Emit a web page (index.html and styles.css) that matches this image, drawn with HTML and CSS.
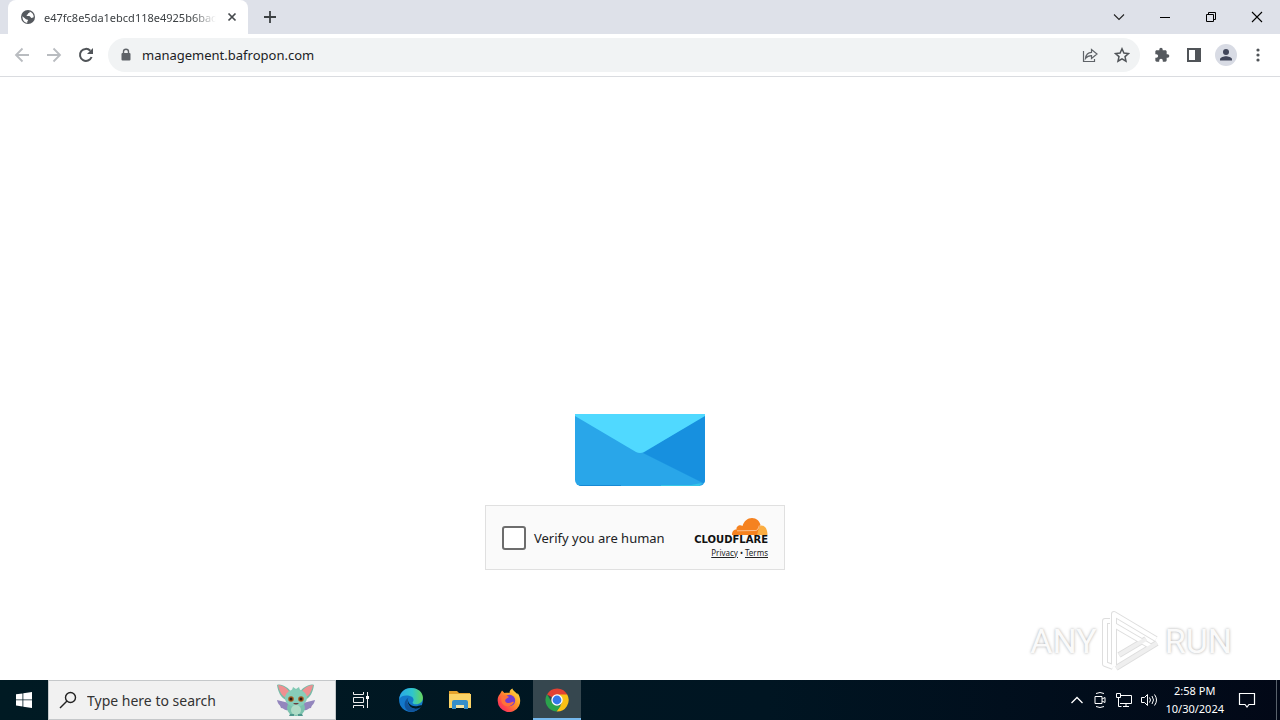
FILE: index.html
```html
<!DOCTYPE html>
<html lang="en">
<head>
<meta charset="utf-8">
<title>management.bafropon.com</title>
<link rel="stylesheet" href="styles.css">
</head>
<body>
<header class="browser">
  <div class="tabstrip">
    <div class="tab">
      <svg class="favicon" viewBox="0 0 16 16" width="16" height="16"><circle cx="8" cy="8" r="7" fill="#55595e"/><path d="M2.4 7.2 6 10.3c.8.4 1.6.1 2 .7.3.6-.8 1-.7 1.7v1.1C4.500 13.600 2.300 11 2.400 7.200zM9.700 2.400c.4 1-.5 1.300-1.200 1.700-.5.400-.2 1.100-.9 1.300-.9.200-1.300.7-.8 1.300.6.700 2 .1 2.900.5 1 .4.9 1.600 2 1.700.8.100 1.300-.5 2-.6C13.900 5.600 12.300 3.200 9.700 2.400z" fill="#fff"/></svg>
      <span class="tab-title">e47fc8e5da1ebcd118e4925b6bad</span>
      <button class="icon-btn tab-close" aria-label="Close tab"><svg viewBox="0 0 16 16" width="16" height="16"><path d="m4.500 4.500 7 7m0-7-7 7" stroke="#45494d" stroke-width="1.700"/></svg></button>
    </div>
    <button class="icon-btn new-tab" aria-label="New tab"><svg viewBox="0 0 16 16" width="16" height="16"><path d="M8 2v12M2 8h12" stroke="#3c4043" stroke-width="1.800"/></svg></button>
    <div class="window-controls">
      <button class="icon-btn" aria-label="Search tabs"><svg viewBox="0 0 16 16" width="16" height="16"><path d="m3 5.500 5 5 5-5" fill="none" stroke="#222" stroke-width="1.100"/></svg></button>
      <button class="icon-btn" aria-label="Minimize"><svg viewBox="0 0 16 16" width="16" height="16"><path d="M3 8.500h10" stroke="#000"/></svg></button>
      <button class="icon-btn" aria-label="Restore"><svg viewBox="0 0 16 16" width="16" height="16"><path d="M3.500 5.500h7v7h-7zM5.500 5.500v-2h7v7h-2" fill="none" stroke="#000"/></svg></button>
      <button class="icon-btn" aria-label="Close"><svg viewBox="0 0 16 16" width="16" height="16"><path d="m3 3 10 10m0-10L3 13" stroke="#000" stroke-width="1.100"/></svg></button>
    </div>
  </div>
  <div class="toolbar">
    <nav class="nav">
      <button class="icon-btn" aria-label="Back"><svg viewBox="0 0 16 16" width="16" height="16"><path d="M15 8H2m6.500-6.500L2 8l6.500 6.500" fill="none" stroke="#b9bcc0" stroke-width="1.800"/></svg></button>
      <button class="icon-btn" aria-label="Forward"><svg viewBox="0 0 16 16" width="16" height="16"><path d="M1 8h13M7.500 1.500 14 8l-6.500 6.500" fill="none" stroke="#b9bcc0" stroke-width="1.800"/></svg></button>
      <button class="icon-btn" aria-label="Reload"><svg viewBox="0 0 16 16" width="16" height="16"><path d="M13.600 10A6 6 0 1 1 12.300 3.700" fill="none" stroke="#505458" stroke-width="2"/><path d="M15 1v6H9z" fill="#505458"/></svg></button>
    </nav>
    <div class="omnibox">
      <svg viewBox="0 0 12 14" width="12" height="14"><path d="M3.500 6V3.700a2.500 2.500 0 0 1 5 0V6" fill="none" stroke="#5f6368" stroke-width="1.400"/><rect x="1.500" y="5" width="9" height="7.500" rx="1" fill="#5f6368"/></svg>
      <input class="url" type="text" value="management.bafropon.com" aria-label="Address">
      <button class="icon-btn" aria-label="Share"><svg viewBox="0 0 16 16" width="16" height="16"><path d="M1.500 4v10.500h11V12M3.500 11.500C4 7.500 6 5.500 9.500 5.400V2.500L15 7l-5.500 4.500V8.700c-3 0-4.500.8-6 2.800z" fill="none" stroke="#5f6368" stroke-width="1.200"/></svg></button>
      <button class="icon-btn" aria-label="Bookmark"><svg viewBox="0 0 16 16" width="16" height="16"><path d="m8 1.800 1.900 4.300 4.600.4-3.500 3.100 1 4.600-4-2.400-4 2.400 1-4.600-3.500-3.100 4.600-.4z" fill="none" stroke="#505458" stroke-width="1.500"/></svg></button>
    </div>
    <div class="actions">
      <button class="icon-btn" aria-label="Extensions"><svg viewBox="0 0 24 24" width="16" height="16"><path fill="#55595e" d="M20.500 11H19V7c0-1.100-.9-2-2-2h-4V3.500a2.500 2.500 0 0 0-5 0V5H4c-1.100 0-2 .9-2 2v3.800h1.500a2.700 2.700 0 0 1 0 5.400H2V20c0 1.100.9 2 2 2h3.800v-1.500a2.700 2.700 0 0 1 5.400 0V22H17c1.100 0 2-.9 2-2v-4h1.500a2.500 2.500 0 0 0 0-5z"/></svg></button>
      <button class="icon-btn" aria-label="Side panel"><svg viewBox="0 0 16 16" width="16" height="16"><path fill="#505458" fill-rule="evenodd" d="M1 1h14v14H1zm2 2v10h6V3z"/></svg></button>
      <button class="icon-btn" aria-label="Profile"><svg viewBox="0 0 22 22" width="22" height="22"><circle cx="11" cy="11" r="11" fill="#d8dbe4"/><circle cx="11" cy="8" r="3" fill="#41465a"/><path d="M5 16.500v-1.300c0-2 4-3 6-3s6 1 6 3v1.300z" fill="#41465a"/></svg></button>
      <button class="icon-btn" aria-label="Menu"><svg viewBox="0 0 16 16" width="16" height="16" fill="#505458"><circle cx="8" cy="3" r="1.600"/><circle cx="8" cy="8" r="1.600"/><circle cx="8" cy="13" r="1.600"/></svg></button>
    </div>
  </div>
</header>

<main class="page">
  <div class="challenge">
    <svg class="envelope" viewBox="0 0 130 72" width="130" height="72">
      <defs><clipPath id="env"><path d="M0 0h130v66a6 6 0 0 1-6 6H6a6 6 0 0 1-6-6z"/></clipPath></defs>
      <g clip-path="url(#env)"><path d="M0 0h130v72H0z" fill="#29a6e9"/><path d="M130 1v69L68 39z" fill="#1790df"/><path d="M0 0h130v2L69 38q-4 2-8 0L0 2z" fill="#50d9ff"/><path d="M4 71h42v1H4z" fill="#1689d4"/><path d="M86 71h30l11-2-3 3H86z" fill="#35c5e8"/></g>
    </svg>
    <div class="widget">
      <label class="verify"><input type="checkbox" class="box"><span>Verify you are human</span></label>
      <div class="brand">
        <svg viewBox="0 0 36 17" width="36" height="17"><path d="M0 17c0-4 2-5.500 4.500-5.500C4 8 8 6 10.500 8 12 3 15.500 0 20 0c4.500 0 7.500 3 8.500 7L26 17z" fill="#f58220"/><path d="M25 17c1-3 1.500-8 4-9.500 4-.2 6.500 3.500 6.500 9.500z" fill="#fbad41"/><path d="m5 12.800 18.500-.3c2 0 3-2 3.800-5" fill="none" stroke="#fff" stroke-width=".5"/></svg>
        <strong class="brand-name">CLOUDFLARE</strong>
        <div class="legal"><a href="#">Privacy</a><span>•</span><a href="#">Terms</a></div>
      </div>
    </div>
  </div>
  <div class="watermark">
    <span>ANY</span>
    <svg viewBox="0 0 60 64" width="60" height="64" fill="none" stroke-linejoin="round"><g stroke="#dedede" stroke-width="6"><path d="M13 57V5l42 25"/><path d="M9 12H4v43l8 3"/><path d="M13 16l36 21M15 59l41-25M18 46l27-16"/></g><g stroke="#fff" stroke-width="4"><path d="M13 57V5l42 25"/><path d="M9 12H4v43l8 3"/><path d="M13 16l36 21"/></g><path d="M15 59l41-25M18 46l27-16" stroke="#efefef" stroke-width="4"/></svg>
    <span>RUN</span>
  </div>
</main>

<footer class="taskbar">
  <button class="icon-btn start" aria-label="Start"><svg viewBox="0 0 16 16" width="16" height="16" fill="#fff"><path d="M0 2.300 6.500 1.400v6.100H0zM7.300 1.300 16 0v7.500H7.300zM0 8.300h6.500v6.200L0 13.600zM7.300 8.300H16V16l-8.700-1.300z"/></svg></button>
  <div class="search">
    <svg viewBox="0 0 18 18" width="18" height="18" fill="none" stroke="#222" stroke-width="1.400"><circle cx="11.500" cy="6.500" r="5"/><path d="m8 10-7 7"/></svg>
    <input class="search-input" type="text" placeholder="Type here to search" aria-label="Type here to search">
    <svg class="creature" viewBox="0 0 40 34" width="40" height="34"><path d="M13 20 1 17c1 5 3 4 4 8 3 0 3 3 7 2zM27 20l12-3c-1 5-3 4-4 8-3 0-3 3-7 2z" fill="#9386bd"/><path d="M1 2c4-2 12 3 14 7l-5 8C5 15 2 9 1 2zM38 2c-4-2-12 3-14 7l5 8c5-2 8-8 9-15z" fill="#76bba8"/><path d="M2 2c5 0 10 4 12 8l-4 5C5 12 3 7 2 2zM37 2c-5 0-10 4-12 8l4 5c5-3 7-8 8-13z" fill="#ef8f91"/><ellipse cx="20" cy="25" rx="9" ry="8" fill="#7bc2ad"/><ellipse cx="20" cy="15" rx="11" ry="9" fill="#87cdb9"/><path d="m16 7 1-3 3 2 3-2 1 3z" fill="#82c9b4"/><ellipse cx="20" cy="27" rx="5" ry="5" fill="#afdbc6"/><circle cx="15" cy="16" r="2.800" fill="#a85b20"/><circle cx="25" cy="16" r="2.800" fill="#a85b20"/><circle cx="15" cy="16" r="1.500" fill="#291b14"/><circle cx="25" cy="16" r="1.500" fill="#291b14"/><path d="M17 20q3 3 6 0" fill="#6b3d3e"/><path d="M14 31h4v2h-5zM22 31h4l1 2h-5z" fill="#4f978c"/></svg>
  </div>
  <nav class="apps">
    <button class="app task-view" aria-label="Task view"><svg viewBox="0 0 18 18" width="18" height="18" fill="none" stroke="#eee"><path d="M1.500 1v2.500h10V1M1.500 17v-2.500h10V17M1.500 6.500h10v5h-10zM15.500 1v16"/><path d="M14 5h3v3h-3z" fill="#fff" stroke="none"/></svg></button>
    <button class="app" aria-label="Edge"><svg viewBox="0 0 24 24" width="26" height="26"><defs><linearGradient id="edge"><stop stop-color="#2aa8e8"/><stop offset=".55" stop-color="#2fc5cd"/><stop offset="1" stop-color="#66d65b"/></linearGradient></defs><circle cx="12" cy="12" r="11" fill="#1378ca"/><path d="M1.200 11C2 4.500 6.500 1 12.300 1 18.500 1 23 5 23 10c0 4-3 6-6.200 6-2.300 0-3.800-.9-3.300-2 1.800-2 .8-5-2.500-5.800C7 7.200 2.500 8 1.200 11z" fill="url(#edge)"/><path d="M9.500 10C7 14 10 20 16 20c2 0 4-1 5-1.800C17 24 10 24 7.500 20.500 5 17 6 12 9.500 10z" fill="#11549b"/><path d="M9.500 10c-1.500 4 2 8.500 8 7.700 2.500-.3 3.800-1.200 4.500-1 0 1-1 2-1 2-7 4-14-2-11.500-8.700z" fill="#001923"/></svg></button>
    <button class="app" aria-label="File Explorer"><svg viewBox="0 0 22 20" width="22" height="20"><path d="M0 1h8l2 2h11v15H0z" fill="#e5a32d"/><path d="M0 4h22v14H0z" fill="#fbd366"/><path d="M3 19v-7q0-2 2-2h12q2 0 2 2v7h-4v-4H7v4z" fill="#378fc9"/><path d="M7 15h8v3H7z" fill="#f5e3a2"/></svg></button>
    <button class="app" aria-label="Firefox"><svg viewBox="0 0 24 24" width="24" height="24"><defs><linearGradient id="fox" x1="1" y1="0" x2="0" y2="1"><stop stop-color="#fff150"/><stop offset=".4" stop-color="#ff9a26"/><stop offset=".75" stop-color="#ff434c"/><stop offset="1" stop-color="#e6247d"/></linearGradient></defs><path d="M3 6 5 2.500 7.500 5c2-.4 4-.2 5 0 0-2 1-4 3-4.500 0 2 4 4 5 6V5c3 4 3.500 9 1.500 13A11.300 11.300 0 0 1 .7 13C.5 10 1.300 8 3 6z" fill="url(#fox)"/><circle cx="12.500" cy="12.500" r="5.700" fill="#743bd1"/><path d="M5 8c3-1 6 0 7 1l-3 2c-2 2 0 4 3 4 2 0 3-2 5-1-2 5-9 6-12 1-1-2-1-5 0-7z" fill="#ff7139"/></svg></button>
    <button class="app active" aria-label="Chrome"><svg viewBox="0 0 24 24" width="24" height="24"><path d="M12 12 2 6.500A11.500 11.500 0 0 1 22.200 6.500z" fill="#e34133"/><path d="M12 6.500h10.200A11.500 11.500 0 0 1 11.500 23.500L17 14.500z" fill="#fbc116"/><path d="M2 6.200 7.200 15 12 17.500h4l-4.500 6A11.500 11.500 0 0 1 2 6.200z" fill="#2ba24c"/><circle cx="12" cy="12" r="5.700" fill="#fff"/><circle cx="12" cy="12" r="4.400" fill="#3478ea"/></svg></button>
  </nav>
  <div class="tray">
    <svg viewBox="0 0 16 16" width="16" height="16" fill="none" stroke="#fff" stroke-width="1.300"><path d="m2.500 11 5.500-5.500 5.500 5.500"/></svg>
    <svg viewBox="0 0 16 18" width="16" height="18" fill="none" stroke="#fff"><path d="M4 2.500q4-2 8 0M4 15.500q4 2 8 0M3 5.500h7v7H3zM10 8l3-1.500v5L10 10"/></svg>
    <svg viewBox="0 0 18 16" width="18" height="16" fill="none" stroke="#fff"><path d="M5 3.500h11.500v8H5M8 14.500h6M11 11.500v3M1.500 1.500h4v4h-4zM3.500 5.500v9h3"/></svg>
    <svg viewBox="0 0 18 16" width="18" height="16" fill="none" stroke="#fff"><path d="M1.500 5.500h3l3-3v11l-3-3h-3zM9.500 5.500q2 2.500 0 5M12 4q3 4 0 8M14.500 2.500q4 5.500 0 11"/></svg>
    <div class="clock"><time>2:58 PM</time><time>10/30/2024</time></div>
    <svg class="notice" viewBox="0 0 18 18" width="18" height="18" fill="none" stroke="#fff" stroke-width="1.200"><path d="M1.500 2.500h15v11H11L9 16l-2-2.500H1.500z"/></svg>
  </div>
</footer>
</body>
</html>
```
FILE: styles.css
```css
* { box-sizing: border-box; }
body { margin: 0; min-height: 100vh; display: flex; flex-direction: column; background: #fff; color: #202124; font-family: "Noto Sans", "Open Sans", sans-serif; font-size: 13px; }
button, input { font: inherit; color: inherit; margin: 0; }
svg { display: block; flex: none; }
.icon-btn, .app { display: flex; align-items: center; justify-content: center; padding: 0; border: 0; background: none; }

.tabstrip { display: flex; align-items: center; height: 34px; padding-left: 8px; background: #dee1e9; }
.tab { display: flex; align-items: center; width: 240px; height: 34px; padding: 0 8px 0 12px; border-radius: 8px 8px 0 0; background: #fff; }
.tab-title { flex: 1; min-width: 0; margin: 0 8px; overflow: hidden; white-space: nowrap; font-size: 11px; color: #3c4043; mask-image: linear-gradient(to right, #000 86%, transparent); }
.new-tab { margin-left: 14px; }
.window-controls { display: flex; margin-left: auto; height: 28px; }
.window-controls .icon-btn { width: 46px; }

.toolbar { display: flex; align-items: center; height: 43px; padding: 0 6px 0 8px; border-bottom: 1px solid #dadce0; }
.nav { display: flex; width: 100px; padding-left: 6px; gap: 16px; }
.omnibox { display: flex; flex: 1; align-items: center; gap: 16px; min-width: 0; height: 34px; padding: 0 10px 0 12px; border-radius: 17px; background: #f1f3f4; }
.url { flex: 1; min-width: 0; margin-left: -6px; padding: 0; border: 0; background: none; outline: 0; font-size: 13px; }
.actions { display: flex; align-items: center; width: 134px; padding-left: 6px; }
.actions .icon-btn { width: 32px; }

.page { position: relative; flex: 1; display: flex; flex-direction: column; align-items: center; justify-content: flex-end; padding-bottom: 110px; }
.challenge { display: flex; flex-direction: column; gap: 19px; width: 310px; }
.envelope { align-self: center; }
.widget { display: flex; align-items: center; justify-content: space-between; width: 300px; height: 65px; padding: 0 16px; border: 1px solid #e0e0e0; background: #fafafa; }
.verify { display: flex; align-items: center; gap: 8px; font-size: 13px; }
.box { appearance: none; width: 24px; height: 24px; border: 2px solid #6d6d6d; border-radius: 3px; background: #fff; }
.brand { display: flex; flex-direction: column; align-items: flex-end; }
.brand-name { font: bold 10px/10px "DejaVu Sans", sans-serif; color: #111; }
.legal { display: flex; gap: 2px; margin-top: 3px; font-size: 8px; line-height: 10px; }
.legal a { color: #222; }

.watermark { position: absolute; right: 48px; bottom: 7px; display: flex; align-items: center; gap: 4px; font: 34px/48px "Roboto", sans-serif; color: #fafafa; text-shadow: 0 0 3px #aaa; }

.taskbar { display: flex; height: 40px; background: linear-gradient(to right, #001a23, #001522 60%, #020817); color: #fff; }
.start { width: 48px; }
.search { display: flex; align-items: center; gap: 10px; width: 288px; padding: 0 19px 0 10px; border: 1px solid #c5c8ca; background: #f1f1f1; }
.search-input { flex: 1; min-width: 0; padding: 0; border: 0; background: none; outline: 0; font-size: 14px; color: #333; }
.search-input::placeholder { color: #333; opacity: 1; }
.apps { display: flex; }
.app { width: 49px; }
.app.active { width: 48px; background: #36474f; box-shadow: inset 0 -2px #76b9ed; }
.app.task-view { width: 50px; }
.tray { display: flex; align-items: center; gap: 7px; margin-left: auto; padding-right: 20px; border-right: 1px solid #59616b; margin-right: 3px; }
.clock { display: flex; flex-direction: column; align-items: center; font-size: 11px; line-height: 18px; }
.notice { margin-left: 7px; }
```
